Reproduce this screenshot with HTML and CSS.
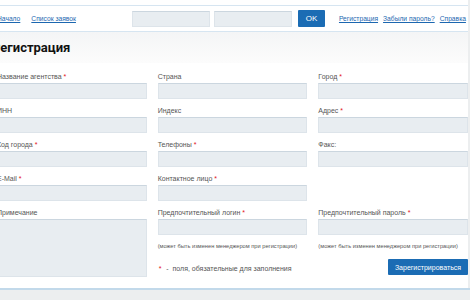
FILE: index.html
```html
<!DOCTYPE html>
<html lang="ru">
<head>
    <meta charset="UTF-8">
    <meta name="viewport" content="width=device-width, initial-scale=1.0">
    <title>Регистрация</title>
    <link rel="stylesheet" href="styles.css">
</head>
<body>
    <div class="page">
        <div class="topbar">
            <div class="nav-left">
                <a href="#">Начало</a>
                <a href="#">Список заявок</a>
            </div>
            <div class="login-box">
                <input type="text" class="login-input">
                <input type="password" class="login-input">
                <button class="btn-ok">OK</button>
            </div>
            <div class="nav-right">
                <a href="#">Регистрация</a>
                <a href="#">Забыли пароль?</a>
                <a href="#">Справка</a>
            </div>
        </div>

        <div class="title-bar">
            <h1>Регистрация</h1>
        </div>

        <form class="reg-form">
            <div class="field">
                <label>Название агентства <span class="req">*</span></label>
                <input type="text" class="text-input">
            </div>
            <div class="field">
                <label>Страна</label>
                <input type="text" class="text-input">
            </div>
            <div class="field">
                <label>Город <span class="req">*</span></label>
                <input type="text" class="text-input">
            </div>

            <div class="field">
                <label>ИНН</label>
                <input type="text" class="text-input">
            </div>
            <div class="field">
                <label>Индекс</label>
                <input type="text" class="text-input">
            </div>
            <div class="field">
                <label>Адрес <span class="req">*</span></label>
                <input type="text" class="text-input">
            </div>

            <div class="field">
                <label>Код города <span class="req">*</span></label>
                <input type="text" class="text-input">
            </div>
            <div class="field">
                <label>Телефоны <span class="req">*</span></label>
                <input type="text" class="text-input">
            </div>
            <div class="field">
                <label>Факс:</label>
                <input type="text" class="text-input">
            </div>

            <div class="field">
                <label>E-Mail <span class="req">*</span></label>
                <input type="text" class="text-input">
            </div>
            <div class="field">
                <label>Контактное лицо <span class="req">*</span></label>
                <input type="text" class="text-input">
            </div>
            <div class="field"></div>

            <div class="field">
                <label>Примечание</label>
                <textarea class="text-input note-area"></textarea>
            </div>
            <div class="field">
                <label>Предпочтительный логин <span class="req">*</span></label>
                <input type="text" class="text-input">
                <div class="hint">(может быть изменен менеджером при регистрации)</div>
                <div class="req-note"><span class="req">*</span> - &nbsp;поля, обязательные для заполнения</div>
            </div>
            <div class="field">
                <label>Предпочтительный пароль <span class="req">*</span></label>
                <input type="password" class="text-input">
                <div class="hint">(может быть изменен менеджером при регистрации)</div>
                <div class="actions">
                    <button type="submit" class="btn-submit">Зарегистрироваться</button>
                </div>
            </div>
        </form>
    </div>
    <div class="footer-band"></div>
</body>
</html>
```

FILE: styles.css
```css
* {
    margin: 0;
    padding: 0;
    box-sizing: border-box;
}

body {
    font-family: "Liberation Sans", Arial, sans-serif;
    background-color: #eceeef;
    overflow: hidden;
}

.page {
    width: 471px;
    margin-left: -3px;
    background: white;
    padding-top: 5px;
}

a {
    color: #1c67b0;
    text-decoration: underline;
    white-space: nowrap;
}

.topbar {
    display: flex;
    align-items: center;
    height: 27px;
    border-top: 1px solid #d6e5f1;
    border-bottom: 1px solid #d6e5f1;
    font-size: 6.7px;
}

.nav-left {
    display: flex;
    gap: 11px;
    flex-shrink: 0;
}

.login-box {
    display: flex;
    align-items: center;
    margin-left: 56px;
    flex-shrink: 0;
}

.login-input {
    width: 78px;
    height: 16px;
    background: #e8edf1;
    border: 1px solid #dde4ea;
    border-top-color: #cbd6df;
    margin-right: 4px;
}

.login-input + .login-input {
    margin-right: 6px;
}

.btn-ok {
    width: 27px;
    height: 17px;
    background: #1b6cb4;
    border: none;
    border-radius: 1px;
    color: white;
    font-family: "Liberation Sans", Arial, sans-serif;
    font-size: 8px;
}

.nav-right {
    display: flex;
    gap: 5px;
    margin-left: 14px;
    flex-shrink: 0;
}

.title-bar {
    height: 31px;
    background: linear-gradient(to bottom, #f4f5f6, #fcfcfc);
    display: flex;
    align-items: center;
}

.title-bar h1 {
    font-family: Roboto, "Liberation Sans", sans-serif;
    font-size: 13px;
    font-weight: bold;
    color: #111;
    margin-left: -5px;
}

.reg-form {
    display: grid;
    grid-template-columns: repeat(3, minmax(0, 1fr));
    column-gap: 11px;
    row-gap: 7px;
    padding: 9px 0 11px;
}

.field {
    display: flex;
    flex-direction: column;
    min-width: 0;
}

.field label {
    font-size: 7px;
    line-height: 9px;
    color: #555;
    margin-bottom: 2px;
    white-space: nowrap;
}

.req {
    color: #e3141b;
}

.text-input {
    width: 100%;
    min-width: 0;
    height: 16px;
    background: #e8edf1;
    border: 1px solid #dde4ea;
    border-top-color: #cbd6df;
}

.note-area {
    height: 58px;
    resize: none;
}

.hint {
    font-size: 5.7px;
    line-height: 8px;
    color: #555;
    margin-top: 7px;
    white-space: nowrap;
}

.req-note {
    font-size: 7px;
    line-height: 9px;
    color: #555;
    margin-top: 14px;
    padding-left: 1px;
    white-space: nowrap;
}

.req-note .req {
    margin-right: 3px;
}

.actions {
    display: flex;
    justify-content: flex-end;
    margin-top: 9px;
}

.btn-submit {
    width: 80px;
    height: 16px;
    background: #1b6cb4;
    border: none;
    border-radius: 1px;
    color: white;
    font-family: "Liberation Sans", Arial, sans-serif;
    font-size: 7px;
}

.footer-band {
    height: 20px;
    border-top: 2px solid #c2d9ea;
    background: #eceeef;
}
```
